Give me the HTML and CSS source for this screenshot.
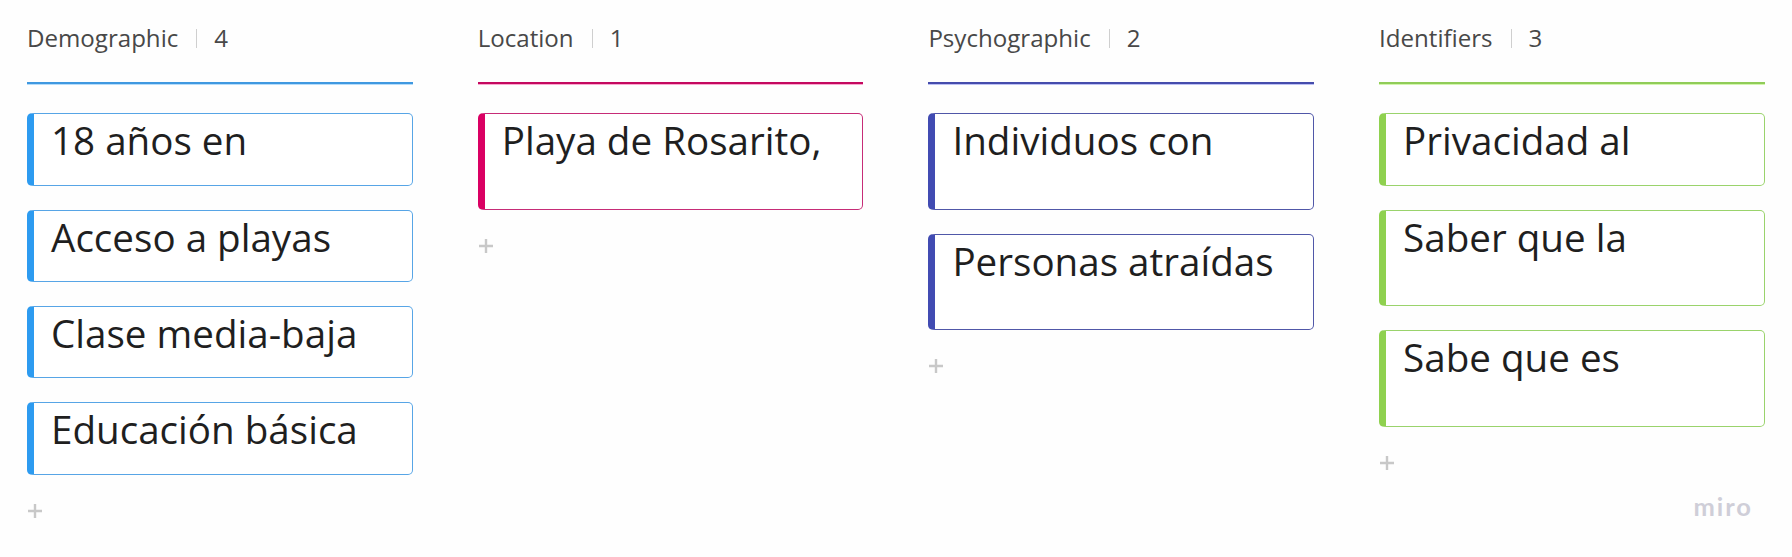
FILE: index.html
```html
<!DOCTYPE html>
<html lang="es">
<head>
<meta charset="utf-8">
<title>Board</title>
<link rel="stylesheet" href="styles.css">
</head>
<body>
<main class="board">
  <section class="column blue">
    <header class="head"><span>Demographic</span><i class="sep"></i><span>4</span></header>
    <article class="card">18 años en</article>
    <article class="card">Acceso a playas</article>
    <article class="card">Clase media-baja</article>
    <article class="card">Educación básica</article>
    <svg class="plus" viewBox="0 0 14 14"><path d="M7 0V14M0 7H14"/></svg>
  </section>
  <section class="column pink">
    <header class="head"><span>Location</span><i class="sep"></i><span>1</span></header>
    <article class="card tall">Playa de Rosarito,</article>
    <svg class="plus" viewBox="0 0 14 14"><path d="M7 0V14M0 7H14"/></svg>
  </section>
  <section class="column indigo">
    <header class="head"><span>Psychographic</span><i class="sep"></i><span>2</span></header>
    <article class="card tall">Individuos con</article>
    <article class="card tall">Personas atraídas</article>
    <svg class="plus" viewBox="0 0 14 14"><path d="M7 0V14M0 7H14"/></svg>
  </section>
  <section class="column green">
    <header class="head"><span>Identifiers</span><i class="sep"></i><span>3</span></header>
    <article class="card">Privacidad al</article>
    <article class="card tall">Saber que la</article>
    <article class="card tall">Sabe que es</article>
    <svg class="plus" viewBox="0 0 14 14"><path d="M7 0V14M0 7H14"/></svg>
  </section>
</main>
<div class="brand">miro</div>
</body>
</html>
```

FILE: styles.css
```css
* { box-sizing: border-box; }
body {
  margin: 0;
  height: 557px;
  overflow: hidden;
  position: relative;
  background: #fefefe;
  font-family: "Open Sans", "Noto Sans", sans-serif;
}
.board {
  display: grid;
  grid-template-columns: repeat(4, 385.6px);
  column-gap: 65.1px;
  padding: 0 27px;
  align-items: start;
}
.column { display: flex; flex-direction: column; gap: 24.1px; }
.blue { --accent: #2d9bf0; --line: #3f98e0; --glow: #b5dcfa; --edge: #57a5e6; }
.pink { --accent: #da0063; --line: #c4085f; --glow: #f9a9cf; --edge: #c62c77; }
.indigo { --accent: #414bb2; --line: #454cac; --glow: #bcc0f4; --edge: #5057a8; }
.green { --accent: #8fd14f; --line: #90cc58; --glow: #d3f5ae; --edge: #9ad36c; }
.head {
  display: flex;
  align-items: center;
  height: 84px;
  margin-bottom: 5.2px;
  padding-bottom: 6px;
  border-bottom: 2px solid var(--line);
  box-shadow: 0 1px 0 var(--glow);
  color: #484848;
  font-size: 24.1px;
  line-height: 32px;
  white-space: nowrap;
}
.sep { width: 1px; height: 19px; margin: 0 17px 0 18px; background: #cfcfcf; }
.card {
  height: 72.3px;
  padding: 0 0 0 17px;
  border: 1.4px solid var(--edge);
  border-left: 7px solid var(--accent);
  border-radius: 5px;
  background: #fff;
  color: #1f1f1f;
  font-size: 38.6px;
  line-height: 52.4px;
  white-space: nowrap;
}
.tall { height: 96.4px; }
.plus { width: 14px; height: 14px; margin: 5px 0 0 1px; fill: none; stroke: #c8c8c8; stroke-width: 2.4; }
.brand {
  position: absolute;
  right: 39px;
  bottom: 35px;
  color: #cfced8;
  font: 700 25.5px/32px Lato, sans-serif;
  letter-spacing: 2px;
}
```
